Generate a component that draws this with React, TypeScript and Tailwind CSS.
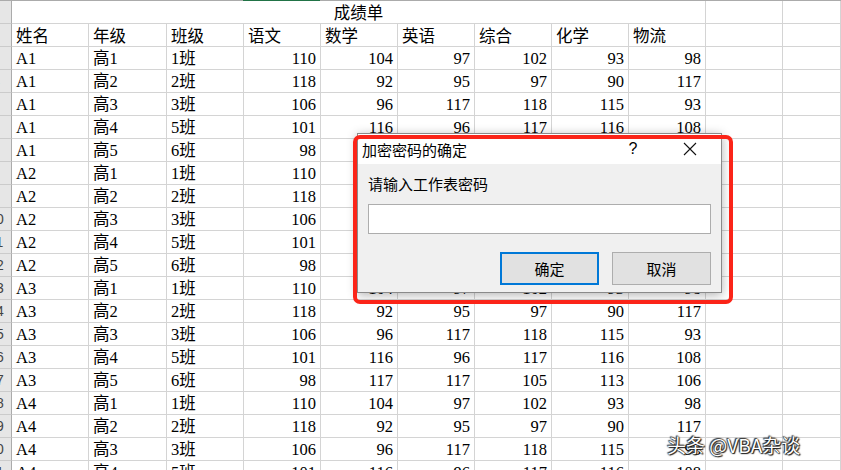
const HEAD = ["姓名", "年级", "班级", "语文", "数学", "英语", "综合", "化学", "物流"];

const GROUP = [
  ["高1", "1班", 110, 104, 97, 102, 93, 98],
  ["高2", "2班", 118, 92, 95, 97, 90, 117],
  ["高3", "3班", 106, 96, 117, 118, 115, 93],
  ["高4", "5班", 101, 116, 96, 117, 116, 108],
  ["高5", "6班", 98, 117, 117, 105, 113, 106],
];

const ROWS: (string | number)[][] = [];
for (let i = 0; i < 20; i++) {
  ROWS.push(["A" + (Math.floor(i / 5) + 1), ...GROUP[i % 5]]);
}

const CELL = "h-[23px] border-r border-b border-[#d4d4d4] flex items-end pb-[1px] px-[4px] overflow-hidden whitespace-nowrap";
const SHEET_FONT = "font-['Liberation_Serif','Noto_Sans_CJK_SC',serif] text-[16.5px] leading-[18px] text-black";

function RowHead({ n }: { n: number }) {
  return (
    <div className="h-[23px] bg-[#e6e6e6] border-r border-b border-r-[#ababab] border-b-[#cbcbcb] overflow-hidden">
      <div className="w-[30px] -ml-[19px] h-full flex items-center justify-center font-['Liberation_Sans',sans-serif] text-[14px] text-[#444]">
        {n}
      </div>
    </div>
  );
}

export default function App() {
  return (
    <div className="relative w-[841px] h-[470px] overflow-hidden bg-white">
      {/* column header bottom edge */}
      <div className="flex h-px bg-[#ababab]">
        <div className="w-[243px]" />
        <div className="w-[77px] bg-[#217346]" />
      </div>

      <div className={`grid grid-cols-[12px_77px_78px_77px_77px_77px_77px_77px_77px_77px_77px_1fr] ${SHEET_FONT}`}>
        {/* title row */}
        <RowHead n={1} />
        <div className={`${CELL} col-span-9 justify-center !pb-0`}>成绩单</div>
        <div className={CELL} />
        <div className={CELL} />

        {/* header row */}
        <RowHead n={2} />
        {HEAD.map((h) => (
          <div key={h} className={`${CELL} !pb-0`}>{h}</div>
        ))}
        <div className={CELL} />
        <div className={CELL} />

        {ROWS.map((r, i) => (
          <div key={i} className="contents">
            <RowHead n={i + 3} />
            {r.map((v, j) => (
              <div key={j} className={`${CELL} ${typeof v === "number" ? "justify-end" : ""}`}>{v}</div>
            ))}
            <div className={CELL} />
            <div className={CELL} />
          </div>
        ))}
      </div>

      {/* dialog */}
      <div className="absolute left-[357px] top-[133px] w-[365px] h-[160px] border border-[#8a8a8a] bg-[#f0f0f0] shadow-[0_2px_10px_rgba(0,0,0,0.3)] font-['Noto_Sans_CJK_SC','Liberation_Sans',sans-serif] text-[15px] text-black">
        <div className="h-[30px] bg-white flex items-center pl-[4px] pr-[24px]">
          <span className="flex-1 leading-none">加密密码的确定</span>
          <span className="w-[14px] text-center font-['Liberation_Sans',sans-serif] text-[16px] leading-none mr-[43px]">?</span>
          <svg width="14" height="14" viewBox="0 0 14 14" fill="none" stroke="#111" strokeWidth="1.1">
            <path d="M1 1 L13 13 M13 1 L1 13" />
          </svg>
        </div>
        <div className="px-[10px] pt-[12px]">
          <div className="leading-none">请输入工作表密码</div>
          <div className="mt-[13px] h-[30px] bg-white border border-[#adadad]" />
          <div className="mt-[18px] flex justify-end gap-[13px]">
            <button className="w-[99px] h-[33px] bg-[#e1e1e1] border-2 border-[#0078d7] leading-none">确定</button>
            <button className="w-[99px] h-[33px] bg-[#e1e1e1] border border-[#adadad] leading-none">取消</button>
          </div>
        </div>
      </div>

      {/* red highlight */}
      <div className="absolute left-[353px] top-[135px] w-[380px] h-[169px] border-[4px] border-[#fb2418] rounded-[7px]" />

      {/* watermark */}
      <div className="absolute left-[667px] top-[433px] font-['Noto_Sans_CJK_SC','Liberation_Sans',sans-serif] text-[19px] leading-[24px] text-white [text-shadow:0_0_1px_#111,0_0_2px_#111,1px_1px_1px_#222,-1px_-1px_1px_#444]">
        头条 @VBA杂谈
      </div>
    </div>
  );
}
